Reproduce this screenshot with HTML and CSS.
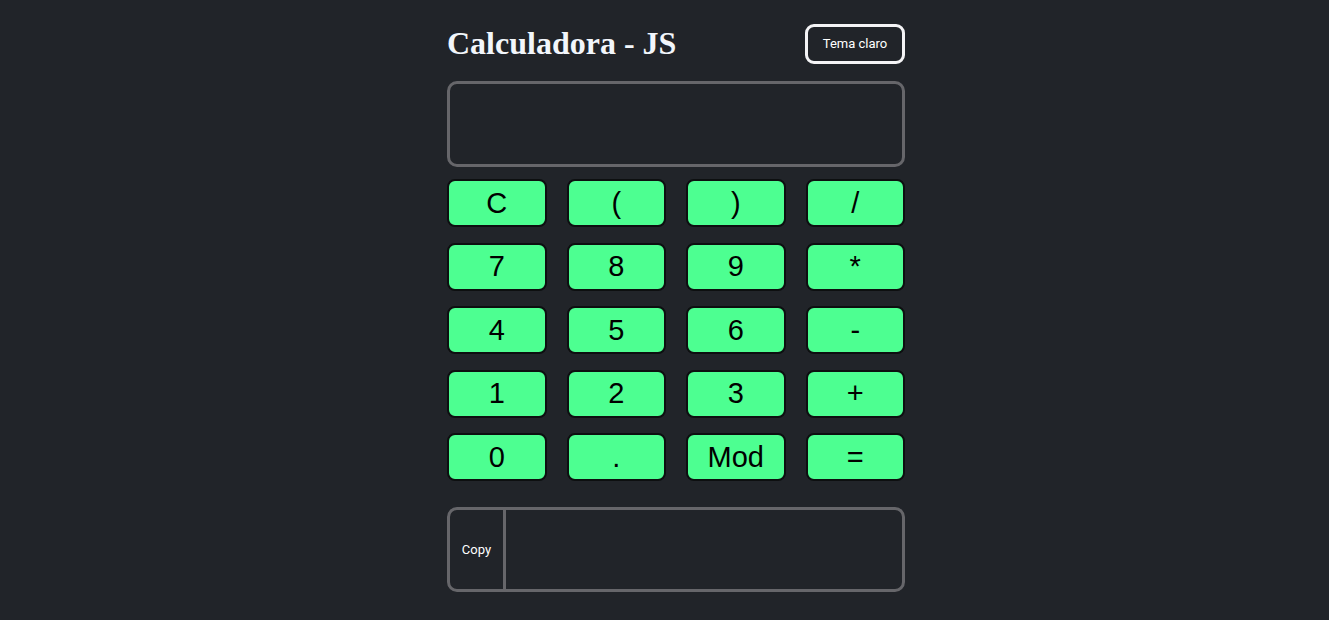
FILE: index.html
```html
<!DOCTYPE html>
<html lang="pt">
<head>
<meta charset="utf-8">
<title>Calculadora - JS</title>
<link rel="stylesheet" href="styles.css">
</head>
<body>
<main class="calc">
  <header class="top">
    <h1 class="title">Calculadora - JS</h1>
    <button class="theme">Tema claro</button>
  </header>
  <div class="display"></div>
  <div class="keys">
    <button class="key">C</button>
    <button class="key">(</button>
    <button class="key">)</button>
    <button class="key">/</button>
    <button class="key">7</button>
    <button class="key">8</button>
    <button class="key">9</button>
    <button class="key">*</button>
    <button class="key">4</button>
    <button class="key">5</button>
    <button class="key">6</button>
    <button class="key">-</button>
    <button class="key">1</button>
    <button class="key">2</button>
    <button class="key">3</button>
    <button class="key">+</button>
    <button class="key">0</button>
    <button class="key">.</button>
    <button class="key">Mod</button>
    <button class="key">=</button>
  </div>
  <div class="result">
    <button class="copy">Copy</button>
    <div class="output"></div>
  </div>
</main>
</body>
</html>
```
FILE: styles.css
```css
html, body {
  margin: 0;
  padding: 0;
  background: #212429;
}
body {
  display: flex;
  justify-content: center;
}
.calc {
  width: 458px;
  margin-left: 23px;
  padding-top: 24px;
  display: flex;
  flex-direction: column;
}
.top {
  display: flex;
  justify-content: space-between;
  align-items: center;
  height: 39px;
}
.title {
  margin: 0;
  font-family: "Liberation Serif", serif;
  font-weight: bold;
  font-size: 32px;
  color: #f2f6fb;
}
.theme {
  width: 100px;
  height: 40px;
  background: transparent;
  border: 3px solid #f4f4f6;
  border-radius: 9px;
  color: #ffffff;
  font-family: Roboto, sans-serif;
  font-size: 13px;
  padding: 0;
  cursor: pointer;
}
.display {
  margin-top: 18px;
  height: 80px;
  border: 3px solid #66666a;
  border-radius: 10px;
}
.keys {
  margin-top: 12px;
  display: grid;
  grid-template-columns: repeat(4, 1fr);
  column-gap: 20px;
  row-gap: 15.5px;
}
.key {
  height: 48px;
  background: #4dff91;
  border: 2px solid #0d0f10;
  border-radius: 8px;
  font-family: "Liberation Sans", Arial, sans-serif;
  font-size: 29px;
  color: #000;
  padding: 0;
  cursor: pointer;
}
.result {
  margin-top: 26px;
  height: 79px;
  border: 3px solid #66666a;
  border-radius: 10px;
  display: flex;
  overflow: hidden;
}
.copy {
  width: 56px;
  background: transparent;
  border: none;
  border-right: 3px solid #66666a;
  color: #fff;
  font-family: Roboto, sans-serif;
  font-size: 13px;
  padding: 0;
}
.output {
  flex: 1;
}
```
